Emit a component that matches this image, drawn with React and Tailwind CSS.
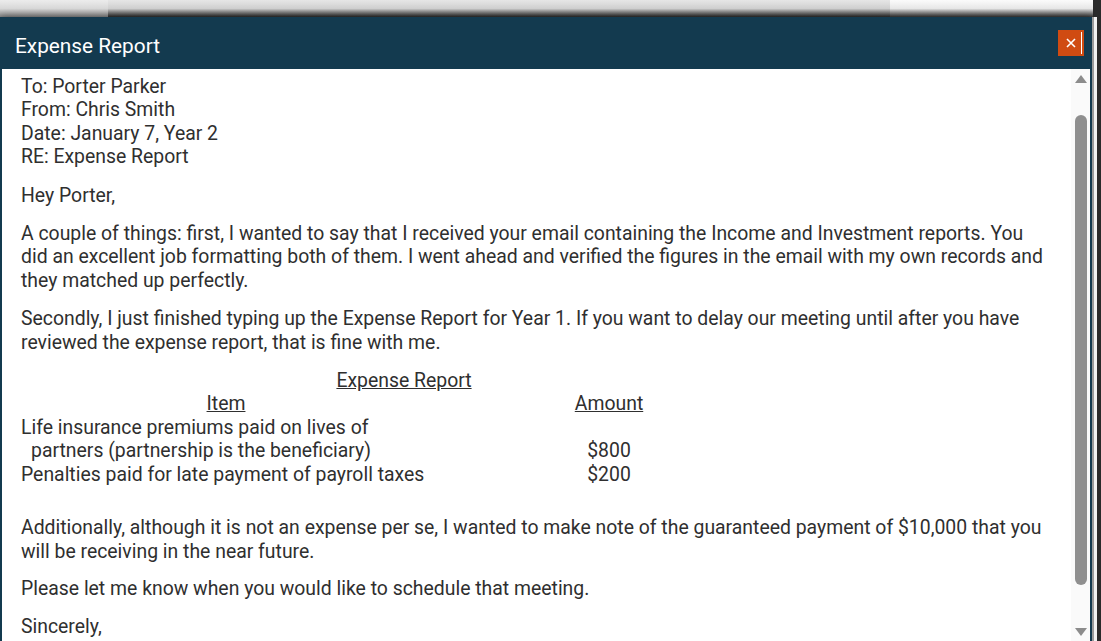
import React from "react";

const text = "font-['Roboto','Liberation_Sans',sans-serif]";

function Scrollbar() {
  return (
    <div className="w-[19px] shrink-0 bg-[#fafafa] flex flex-col items-center">
      <svg width="12" height="8" viewBox="0 0 12 8" className="mt-[6px]">
        <path d="M6 0 L12 8 L0 8 Z" fill="#8c8c8c" />
      </svg>
      <div className="mt-[32px] w-[12px] h-[470px] rounded-[6px] bg-[#8f8f8f]" />
      <div className="flex-1" />
      <svg width="12" height="8" viewBox="0 0 12 8" className="mb-[5px]">
        <path d="M0 0 L12 0 L6 8 Z" fill="#8c8c8c" />
      </svg>
    </div>
  );
}

export default function App() {
  return (
    <div className={`w-[1101px] h-[641px] overflow-hidden flex flex-col bg-[#e9e9e9] ${text}`}>
      {/* page behind the dialog */}
      <div className="h-[17px] shrink-0 flex">
        <div className="w-[108px] bg-gradient-to-b from-[#ececec] via-[#d9d9d9] to-[#8a8a8a]" />
        <div className="w-[782px] bg-gradient-to-b from-[#e6e6e6] via-[#d0d0d0] to-[#2e2e2e]" />
        <div className="w-[203px] bg-gradient-to-b from-[#fbfbfb] via-[#e8e8e8] to-[#3a3a3a]" />
        <div className="flex-1 bg-[#2b2b2b]" />
      </div>

      <div className="flex flex-1 min-h-0">
        {/* dialog */}
        <div className="w-[1092px] flex flex-col bg-[#133a4f] shadow-[0_0_8px_rgba(0,0,0,0.5)]">
          <div className="h-[52px] shrink-0 flex items-center justify-between pl-[15px] pr-[8px]">
            <h1 className="mt-[8px] text-white text-[20.8px] font-normal">Expense Report</h1>
            <button className="w-[26px] h-[26px] bg-[#d04b12] flex items-center justify-center relative">
              <svg width="10" height="10" viewBox="0 0 10 10">
                <path d="M1 1 L9 9 M9 1 L1 9" stroke="white" strokeWidth="1.6" />
              </svg>
              <span className="absolute right-[2px] top-[2px] bottom-[2px] w-[1px] bg-white" />
            </button>
          </div>

          <div className="flex-1 min-h-0 flex ml-[2px] mr-[2px] bg-white">
            <div className="flex-1 min-h-0 overflow-hidden pl-[19px] pr-[20px] pt-[6px] text-[19.4px] leading-[23.4px] text-[#2f2f2f]">
              <p>
                To: Porter Parker<br />
                From: Chris Smith<br />
                Date: January 7, Year 2<br />
                RE: Expense Report
              </p>
              <p className="mt-[15px]">Hey Porter,</p>
              <p className="mt-[15px]">
                A couple of things: first, I wanted to say that I received your email containing the Income and Investment reports. You did an excellent job formatting both of them. I went ahead and verified the figures in the email with my own records and they matched up perfectly.
              </p>
              <p className="mt-[15px]">
                Secondly, I just finished typing up the Expense Report for Year 1. If you want to delay our meeting until after you have reviewed the expense report, that is fine with me.
              </p>
              <table className="mt-[15px] w-[766px] border-collapse">
                <caption className="underline">Expense Report</caption>
                <thead>
                  <tr>
                    <th className="w-[410px] font-normal underline text-center">Item</th>
                    <th className="font-normal underline text-center">Amount</th>
                  </tr>
                </thead>
                <tbody>
                  <tr>
                    <td className="align-bottom">
                      Life insurance premiums paid on lives of<br />
                      <span className="pl-[10px]">partners (partnership is the beneficiary)</span>
                    </td>
                    <td className="align-bottom text-center">$800</td>
                  </tr>
                  <tr>
                    <td>Penalties paid for late payment of payroll taxes</td>
                    <td className="text-center">$200</td>
                  </tr>
                </tbody>
              </table>
              <p className="mt-[30px]">
                Additionally, although it is not an expense per se, I wanted to make note of the guaranteed payment of $10,000 that you will be receiving in the near future.
              </p>
              <p className="mt-[14px]">Please let me know when you would like to schedule that meeting.</p>
              <p className="mt-[15px]">Sincerely,</p>
            </div>
            <Scrollbar />
          </div>
        </div>

        {/* sliver of the page on the right */}
        <div className="flex-1 flex">
          <div className="w-[2px] bg-[#9a9a9a]" />
          <div className="w-[3px] bg-[#f2f2f2]" />
          <div className="flex-1 bg-[#2a2a2a]" />
        </div>
      </div>
    </div>
  );
}
